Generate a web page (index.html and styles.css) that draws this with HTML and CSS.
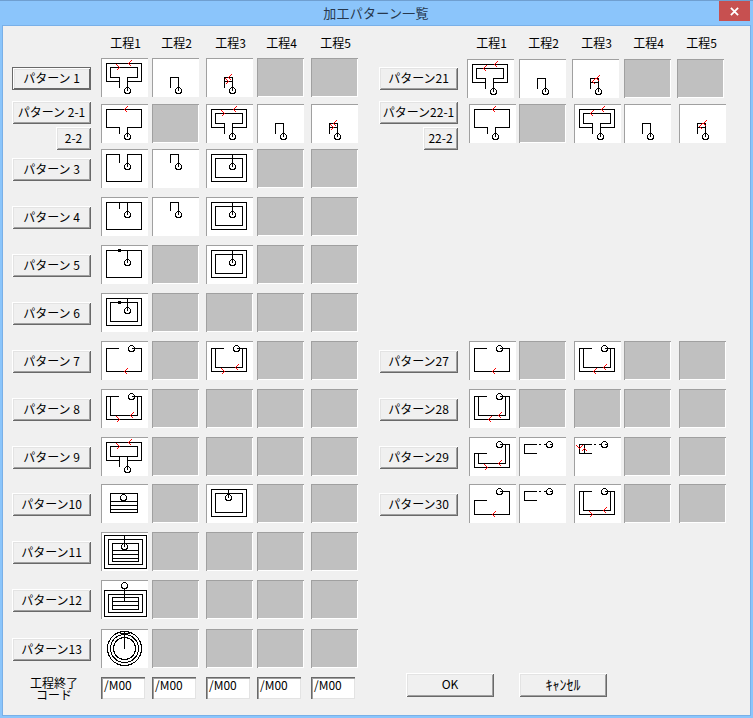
FILE: index.html
```html
<!DOCTYPE html>
<html lang="ja">
<head>
<meta charset="utf-8">
<title>加工パターン一覧</title>
<link rel="stylesheet" href="styles.css">
</head>
<body>
<svg class="defs" aria-hidden="true">
  <defs>
    <g id="small" class="ln"><path d="M18 29V19H26V32"/><circle cx="26" cy="32" r="3"/></g>
    <g id="loop" class="ln"><path d="M18 29V19H9V9H36V19H26V32M18 23H5V5H40V23H26"/><circle cx="26" cy="32" r="3"/></g>
    <g id="p1"><use href="#loop"/><path class="rd" d="M30 2L27 5L30 8M15 6L18 9L15 12"/></g>
    <g id="p21"><use href="#loop"/><path class="rd" d="M30 2L27 5L30 8M19 6L16 9L19 12"/></g>
    <g id="p2"><path class="ln" d="M18 29V23H5V5H40V23H26V32"/><circle class="ln" cx="26" cy="32" r="3"/><path class="rd" d="M26 2L23 5L26 8"/></g>
    <g id="sr"><use href="#small"/><path class="ln" d="M18 23H26"/><path class="rd" d="M25 16L22 19L25 22M19 20L22 23L19 26"/></g>
    <g id="sr2"><use href="#small"/><path class="ln" d="M18 23H26"/><path class="rd" d="M27 16L24 19L27 22M23 19L20 22L23 25"/></g>
    <g id="p3" class="ln"><path d="M18 13V5H5V32H40V5H26V17"/><circle cx="26" cy="17" r="3"/></g>
    <g id="s3" class="ln"><path d="M18 13V5H26V17"/><circle cx="26" cy="17" r="3"/></g>
    <g id="dbl" class="ln"><path d="M5 5H40V32H5ZM9 9H36V28H9ZM26 5V17"/><circle cx="26" cy="17" r="3"/></g>
    <g id="p4" class="ln"><path d="M5 5H40V32H5ZM18 5V11M26 5V17"/><circle cx="26" cy="17" r="3"/></g>
    <g id="p5"><path class="ln" d="M5 5H40V32H5ZM26 5V17"/><circle class="ln" cx="26" cy="17" r="3"/><circle class="dot" cx="18" cy="5" r="2"/></g>
    <g id="p6"><use href="#dbl"/><circle class="dot" cx="18" cy="9" r="2"/></g>
    <g id="open" class="ln"><path d="M17 7H5V30H40V7H30"/><circle cx="30" cy="7" r="3"/></g>
    <g id="p7"><use href="#open"/><path class="rd" d="M26 27L23 30L26 33"/></g>
    <g id="open2" class="ln"><use href="#open"/><path d="M9 7V26H36V7"/></g>
    <g id="p8"><use href="#open2"/><path class="rd" d="M15 27L18 30L15 33M32 23L29 26L32 29"/></g>
    <g id="p27b"><use href="#open2"/><path class="rd" d="M22 27L19 30L22 33M32 23L29 26L32 29"/></g>
    <g id="p9"><path class="ln" d="M18 29V19M18 23H5V5H40V23H26M9 9H36V19H9ZM26 19V32"/><circle class="ln" cx="26" cy="32" r="3"/><path class="rd" d="M30 2L27 5L30 8M15 6L18 9L15 12"/></g>
    <g id="p10" class="ln"><path d="M9 9H36V28H9ZM9 17H36M9 21H36M9 25H36"/><circle cx="22" cy="13" r="3"/></g>
    <g id="p10c" class="ln"><path d="M5 5H40V32H5ZM9 9H36V28H9ZM22 5V13"/><circle cx="22" cy="13" r="3"/></g>
    <g id="p11" class="ln"><path d="M3 3H45V36H3ZM7 7H41V32H7ZM11 11H37V29H11ZM11 18H37M11 22H37M11 26H37M23 3V14"/><circle cx="23" cy="14" r="3"/></g>
    <g id="p12" class="ln"><path d="M3 10H45V36H3ZM7 14H41V32H7ZM11 17H37V29H11ZM11 21H37M11 25H37M23 8V21"/><circle cx="23" cy="5" r="3"/></g>
    <g id="p13" class="ln"><circle cx="23" cy="19" r="17"/><circle cx="23" cy="19" r="14"/><circle cx="23" cy="19" r="11"/><path d="M23 2V19M18 4H28"/></g>
    <g id="p29"><path class="ln" d="M17 16H5V30H40V7H30M9 16V26H36V7"/><circle class="ln" cx="30" cy="7" r="3"/><path class="rd" d="M15 27L18 30L15 33M32 23L29 26L32 29"/></g>
    <g id="p29b" class="ln"><path d="M17 16H5V7H17M19 7H21M24 7H26M30 7H33"/><circle cx="30" cy="7" r="3"/></g>
    <g id="p29c"><path class="ln" d="M17 16H5V7H17M10 7V16M19 7H21M24 7H26M30 7H33"/><circle class="ln" cx="30" cy="7" r="3"/><path class="rd" d="M2 8L5 11L8 8M7 14L10 11L13 14"/></g>
    <g id="p30"><path class="ln" d="M17 16H5V30H40V7H30"/><circle class="ln" cx="30" cy="7" r="3"/><path class="rd" d="M26 27L23 30L26 33"/></g>
  </defs>
</svg>
<div class="window">
  <header class="titlebar">
    <div class="title">加工パターン一覧</div>
    <div class="close"><svg class="close-x" viewBox="0 0 10 10"><path d="M1 1L9 9M9 1L1 9"/></svg></div>
  </header>
  <main class="client">
    <section class="pane">
      <div class="row">
        <div class="slot-empty"></div>
        <div class="cells"><div class="hd">工程1</div><div class="hd">工程2</div><div class="hd">工程3</div><div class="hd">工程4</div><div class="hd">工程5</div></div>
      </div>
      <div class="row">
        <div class="slot"><button class="btn def">パターン 1</button></div>
        <div class="cells">
          <div class="cell"><svg class="pic" viewBox="-.5 -.5 47 39"><use href="#p1"/></svg></div>
          <div class="cell"><svg class="pic" viewBox="-.5 -.5 47 39"><use href="#small"/></svg></div>
          <div class="cell"><svg class="pic" viewBox="-.5 -.5 47 39"><use href="#sr"/></svg></div>
          <div class="cell off"></div><div class="cell off"></div>
        </div>
      </div>
      <div class="row">
        <div class="stack"><button class="btn">パターン 2-1</button><button class="btn sm">2-2</button></div>
        <div class="cells">
          <div class="cell"><svg class="pic" viewBox="-.5 -.5 47 39"><use href="#p2"/></svg></div>
          <div class="cell off"></div>
          <div class="cell"><svg class="pic" viewBox="-.5 -.5 47 39"><use href="#p1"/></svg></div>
          <div class="cell"><svg class="pic" viewBox="-.5 -.5 47 39"><use href="#small"/></svg></div>
          <div class="cell"><svg class="pic" viewBox="-.5 -.5 47 39"><use href="#sr"/></svg></div>
        </div>
      </div>
      <div class="row">
        <div class="slot"><button class="btn">パターン 3</button></div>
        <div class="cells">
          <div class="cell"><svg class="pic" viewBox="-.5 -.5 47 39"><use href="#p3"/></svg></div>
          <div class="cell"><svg class="pic" viewBox="-.5 -.5 47 39"><use href="#s3"/></svg></div>
          <div class="cell"><svg class="pic" viewBox="-.5 -.5 47 39"><use href="#dbl"/></svg></div>
          <div class="cell off"></div><div class="cell off"></div>
        </div>
      </div>
      <div class="row">
        <div class="slot"><button class="btn">パターン 4</button></div>
        <div class="cells">
          <div class="cell"><svg class="pic" viewBox="-.5 -.5 47 39"><use href="#p4"/></svg></div>
          <div class="cell"><svg class="pic" viewBox="-.5 -.5 47 39"><use href="#s3"/></svg></div>
          <div class="cell"><svg class="pic" viewBox="-.5 -.5 47 39"><use href="#dbl"/></svg></div>
          <div class="cell off"></div><div class="cell off"></div>
        </div>
      </div>
      <div class="row">
        <div class="slot"><button class="btn">パターン 5</button></div>
        <div class="cells">
          <div class="cell"><svg class="pic" viewBox="-.5 -.5 47 39"><use href="#p5"/></svg></div>
          <div class="cell off"></div>
          <div class="cell"><svg class="pic" viewBox="-.5 -.5 47 39"><use href="#dbl"/></svg></div>
          <div class="cell off"></div><div class="cell off"></div>
        </div>
      </div>
      <div class="row">
        <div class="slot"><button class="btn">パターン 6</button></div>
        <div class="cells">
          <div class="cell"><svg class="pic" viewBox="-.5 -.5 47 39"><use href="#p6"/></svg></div>
          <div class="cell off"></div><div class="cell off"></div><div class="cell off"></div><div class="cell off"></div>
        </div>
      </div>
      <div class="row">
        <div class="slot"><button class="btn">パターン 7</button></div>
        <div class="cells">
          <div class="cell"><svg class="pic" viewBox="-.5 -.5 47 39"><use href="#p7"/></svg></div>
          <div class="cell off"></div>
          <div class="cell"><svg class="pic" viewBox="-.5 -.5 47 39"><use href="#p8"/></svg></div>
          <div class="cell off"></div><div class="cell off"></div>
        </div>
      </div>
      <div class="row">
        <div class="slot"><button class="btn">パターン 8</button></div>
        <div class="cells">
          <div class="cell"><svg class="pic" viewBox="-.5 -.5 47 39"><use href="#p8"/></svg></div>
          <div class="cell off"></div><div class="cell off"></div><div class="cell off"></div><div class="cell off"></div>
        </div>
      </div>
      <div class="row">
        <div class="slot"><button class="btn">パターン 9</button></div>
        <div class="cells">
          <div class="cell"><svg class="pic" viewBox="-.5 -.5 47 39"><use href="#p9"/></svg></div>
          <div class="cell off"></div><div class="cell off"></div><div class="cell off"></div><div class="cell off"></div>
        </div>
      </div>
      <div class="row">
        <div class="slot"><button class="btn">パターン10</button></div>
        <div class="cells">
          <div class="cell"><svg class="pic" viewBox="-.5 -.5 47 39"><use href="#p10"/></svg></div>
          <div class="cell off"></div>
          <div class="cell"><svg class="pic" viewBox="-.5 -.5 47 39"><use href="#p10c"/></svg></div>
          <div class="cell off"></div><div class="cell off"></div>
        </div>
      </div>
      <div class="row">
        <div class="slot"><button class="btn">パターン11</button></div>
        <div class="cells">
          <div class="cell"><svg class="pic" viewBox="-.5 -.5 47 39"><use href="#p11"/></svg></div>
          <div class="cell off"></div><div class="cell off"></div><div class="cell off"></div><div class="cell off"></div>
        </div>
      </div>
      <div class="row">
        <div class="slot"><button class="btn">パターン12</button></div>
        <div class="cells">
          <div class="cell"><svg class="pic" viewBox="-.5 -.5 47 39"><use href="#p12"/></svg></div>
          <div class="cell off"></div><div class="cell off"></div><div class="cell off"></div><div class="cell off"></div>
        </div>
      </div>
      <div class="row">
        <div class="slot"><button class="btn">パターン13</button></div>
        <div class="cells">
          <div class="cell"><svg class="pic" viewBox="-.5 -.5 47 39"><use href="#p13"/></svg></div>
          <div class="cell off"></div><div class="cell off"></div><div class="cell off"></div><div class="cell off"></div>
        </div>
      </div>
      <div class="row">
        <div class="endlabel">工程終了<br>コード</div>
        <div class="cells"><div class="code">/M00</div><div class="code">/M00</div><div class="code">/M00</div><div class="code">/M00</div><div class="code">/M00</div></div>
      </div>
    </section>
    <section class="pane">
      <div class="row">
        <div class="slot-empty"></div>
        <div class="cells r1"><div class="hd">工程1</div><div class="hd">工程2</div><div class="hd">工程3</div><div class="hd">工程4</div><div class="hd">工程5</div></div>
      </div>
      <div class="row">
        <div class="slot"><button class="btn">パターン21</button></div>
        <div class="cells r1 low">
          <div class="cell"><svg class="pic" viewBox="-.5 -.5 47 39"><use href="#p21"/></svg></div>
          <div class="cell"><svg class="pic" viewBox="-.5 -.5 47 39"><use href="#small"/></svg></div>
          <div class="cell"><svg class="pic" viewBox="-.5 -.5 47 39"><use href="#sr2"/></svg></div>
          <div class="cell off"></div><div class="cell off"></div>
        </div>
      </div>
      <div class="row">
        <div class="stack"><button class="btn">パターン22-1</button><button class="btn sm">22-2</button></div>
        <div class="cells r">
          <div class="cell"><svg class="pic" viewBox="-.5 -.5 47 39"><use href="#p2"/></svg></div>
          <div class="cell off"></div>
          <div class="cell"><svg class="pic" viewBox="-.5 -.5 47 39"><use href="#p21"/></svg></div>
          <div class="cell"><svg class="pic" viewBox="-.5 -.5 47 39"><use href="#small"/></svg></div>
          <div class="cell"><svg class="pic" viewBox="-.5 -.5 47 39"><use href="#sr2"/></svg></div>
        </div>
      </div>
      <div class="skip"></div>
      <div class="row">
        <div class="slot"><button class="btn">パターン27</button></div>
        <div class="cells r">
          <div class="cell"><svg class="pic" viewBox="-.5 -.5 47 39"><use href="#p7"/></svg></div>
          <div class="cell off"></div>
          <div class="cell"><svg class="pic" viewBox="-.5 -.5 47 39"><use href="#p27b"/></svg></div>
          <div class="cell off"></div><div class="cell off"></div>
        </div>
      </div>
      <div class="row">
        <div class="slot"><button class="btn">パターン28</button></div>
        <div class="cells r">
          <div class="cell"><svg class="pic" viewBox="-.5 -.5 47 39"><use href="#p27b"/></svg></div>
          <div class="cell off"></div><div class="cell off"></div><div class="cell off"></div><div class="cell off"></div>
        </div>
      </div>
      <div class="row">
        <div class="slot"><button class="btn">パターン29</button></div>
        <div class="cells r">
          <div class="cell"><svg class="pic" viewBox="-.5 -.5 47 39"><use href="#p29"/></svg></div>
          <div class="cell"><svg class="pic" viewBox="-.5 -.5 47 39"><use href="#p29b"/></svg></div>
          <div class="cell"><svg class="pic" viewBox="-.5 -.5 47 39"><use href="#p29c"/></svg></div>
          <div class="cell off"></div><div class="cell off"></div>
        </div>
      </div>
      <div class="row">
        <div class="slot"><button class="btn">パターン30</button></div>
        <div class="cells r">
          <div class="cell"><svg class="pic" viewBox="-.5 -.5 47 39"><use href="#p30"/></svg></div>
          <div class="cell"><svg class="pic" viewBox="-.5 -.5 47 39"><use href="#p29b"/></svg></div>
          <div class="cell"><svg class="pic" viewBox="-.5 -.5 47 39"><use href="#p8"/></svg></div>
          <div class="cell off"></div><div class="cell off"></div>
        </div>
      </div>
      <div class="skip tail"></div>
      <div class="actions">
        <button class="btn wide">OK</button>
        <button class="btn wide kana">ｷｬﾝｾﾙ</button>
      </div>
    </section>
  </main>
</div>
</body>
</html>
```

FILE: styles.css
```css
html, body {
  margin: 0;
  padding: 0;
}

body {
  width: 753px;
  height: 718px;
  overflow: hidden;
  font-family: "Noto Sans CJK JP", "Liberation Sans", sans-serif;
  color: #000;
}

.defs {
  display: block;
  width: 0;
  height: 0;
}

.window {
  box-sizing: border-box;
  width: 753px;
  height: 718px;
  display: flex;
  flex-direction: column;
  background: #8bc5fb;
  border-top: 1px solid #6f9fd0;
  padding: 0 2px 2px;
}

.titlebar {
  height: 24px;
  display: flex;
  align-items: flex-start;
}

.title {
  flex: 1;
  padding-left: 31px;
  font-size: 13px;
  letter-spacing: .25px;
  line-height: 24px;
  color: #27384d;
  text-align: center;
}

.close {
  width: 31px;
  height: 20px;
  margin-right: 1px;
  display: flex;
  align-items: center;
  justify-content: center;
  background: #c75050;
}

.close-x {
  width: 9px;
  height: 9px;
  fill: none;
  stroke: #fff;
  stroke-width: 2;
}

.client {
  flex: 1;
  display: flex;
  background: #f0f0f0;
  border: 1px solid #79b0e8;
  padding: 10px 0 0 9px;
}

.pane {
  width: 367px;
  display: grid;
  grid-template-rows: 22px 46px 45px 48px 48px 48px 48px 48px 48px 47px 48px 48px 49px 48px auto;
  align-content: start;
}

.row {
  display: flex;
  align-items: flex-start;
  min-height: 0;
}

.slot,
.slot-empty {
  width: 79px;
  flex: none;
}

.slot {
  margin-top: 9px;
}

.stack {
  width: 79px;
  flex: none;
  margin-top: -3px;
  display: flex;
  flex-direction: column;
  align-items: flex-end;
  gap: 3px;
}

.btn {
  display: block;
  box-sizing: border-box;
  width: 79px;
  height: 23px;
  padding: 0 0 2px;
  border: 0;
  background: #f0f0f0;
  box-shadow: inset 1px 1px #fff, inset -1px -1px #696969, inset 2px 2px #e3e3e3, inset -2px -2px #a0a0a0;
  font-family: "Noto Sans CJK JP", sans-serif;
  font-size: 12px;
  line-height: 18px;
  color: #000;
  white-space: nowrap;
}

.btn.def {
  box-shadow: inset 1px 1px #696969, inset -1px -1px #696969, inset 2px 2px #fff, inset -2px -2px #696969, inset 3px 3px #e3e3e3;
}

.btn.sm {
  width: 35px;
}

.btn.wide {
  width: 88px;
  height: 24px;
}

.btn.kana {
  font-size: 14px;
}

.cells {
  display: flex;
  margin-left: 10px;
}

.cells > * {
  margin-left: 4px;
}

.cells > :nth-child(odd) {
  margin-left: 7px;
}

.cells > :first-child {
  margin-left: 0;
}

.cells.r {
  margin-left: 11px;
}

.cells.r > * {
  margin-left: 3px;
}

.cells.r > :nth-child(odd) {
  margin-left: 8px;
}

.cells.r > :first-child {
  margin-left: 0;
}

.cells.r1 {
  margin-left: 9px;
}

.cells.r1 > * {
  margin-left: 5px;
}

.cells.r1 > :nth-child(odd) {
  margin-left: 6px;
}

.cells.r1 > :first-child {
  margin-left: 0;
}

.cells.low {
  margin-top: 1px;
}

.hd {
  box-sizing: border-box;
  width: 47px;
  padding-left: 2px;
  font-size: 12px;
  line-height: 14px;
  text-align: center;
}

.cell {
  width: 47px;
  height: 39px;
  background: #fff;
  box-shadow: inset 1px 1px #a0a0a0, inset -1px -1px #fff;
}

.cell.off {
  background: #c0c0c0;
}

.pic {
  display: block;
  width: 47px;
  height: 39px;
}

.ln,
.ln path,
.ln circle,
.rd,
.dot {
  shape-rendering: crispEdges;
}

.ln {
  fill: none;
  stroke: #000;
  stroke-width: 1;
}

.rd {
  fill: none;
  stroke: #f00;
  stroke-width: 1.3;
}

.dot {
  fill: #000;
}

.endlabel {
  width: 79px;
  flex: none;
  box-sizing: border-box;
  padding-left: 5px;
  font-size: 12px;
  line-height: 12px;
  text-align: center;
}

.code {
  box-sizing: border-box;
  width: 44px;
  height: 22px;
  margin-right: 3px;
  padding: 1px 0 0 3px;
  background: #fff;
  box-shadow: inset 1px 1px #696969, inset 2px 2px #a0a0a0, inset -1px -1px #e3e3e3;
  font-family: "Noto Sans CJK JP", sans-serif;
  font-size: 12px;
  line-height: 14px;
}

.skip {
  grid-row: span 4;
}

.skip.tail {
  grid-row: span 3;
}

.actions {
  display: flex;
  gap: 25px;
  margin: -4px 0 0 27px;
}
```
